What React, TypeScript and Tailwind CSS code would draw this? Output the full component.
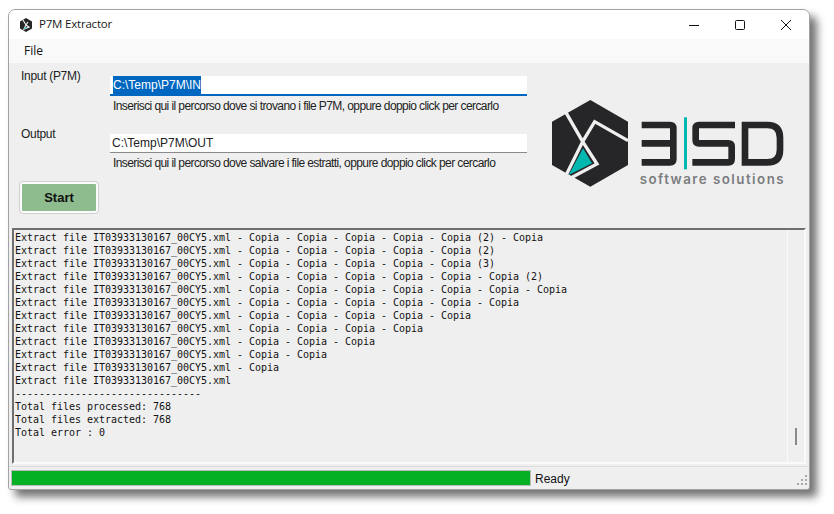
const LOG_LINES = [
  "Extract file IT03933130167_00CY5.xml - Copia - Copia - Copia - Copia - Copia (2) - Copia",
  "Extract file IT03933130167_00CY5.xml - Copia - Copia - Copia - Copia - Copia (2)",
  "Extract file IT03933130167_00CY5.xml - Copia - Copia - Copia - Copia - Copia (3)",
  "Extract file IT03933130167_00CY5.xml - Copia - Copia - Copia - Copia - Copia - Copia (2)",
  "Extract file IT03933130167_00CY5.xml - Copia - Copia - Copia - Copia - Copia - Copia - Copia",
  "Extract file IT03933130167_00CY5.xml - Copia - Copia - Copia - Copia - Copia - Copia",
  "Extract file IT03933130167_00CY5.xml - Copia - Copia - Copia - Copia - Copia",
  "Extract file IT03933130167_00CY5.xml - Copia - Copia - Copia - Copia",
  "Extract file IT03933130167_00CY5.xml - Copia - Copia - Copia",
  "Extract file IT03933130167_00CY5.xml - Copia - Copia",
  "Extract file IT03933130167_00CY5.xml - Copia",
  "Extract file IT03933130167_00CY5.xml",
  "-------------------------------",
  "Total files processed: 768",
  "Total files extracted: 768",
  "Total error : 0",
];

function Logo() {
  return (
    <svg viewBox="60 285 720 285" className="h-[95px] w-[240px]">
      <path d="M184 300L297 365V495L184 560L69 495V365Z" fill="#262628" />
      <path
        d="M111 338L161 425L110 528M161 425L197 365L297 422M161 425L204 492L125 534"
        fill="none"
        stroke="#efefef"
        strokeWidth="10"
      />
      <path d="M162 445L189 490L119 525Z" fill="#00b8b0" />
      <g fill="none" stroke="#262628" strokeWidth="20">
        <path d="M338 375H423Q433 375 433 385V477Q433 487 423 487H338M338 430H433" />
        <path d="M618 375H510Q500 375 500 385V420Q500 430 510 430H598Q608 430 608 440V477Q608 487 598 487H490" />
        <path d="M648 375H715Q753 375 753 413V449Q753 487 715 487H648Z" />
      </g>
      <rect x="465" y="352" width="9" height="156" fill="#00b8b0" />
      <text
        x="332"
        y="551"
        fill="#7b7d80"
        fontFamily="Inter, sans-serif"
        fontSize="40"
        fontWeight="600"
        letterSpacing="4.4"
      >
        software solutions
      </text>
    </svg>
  );
}

function TitleIcon() {
  return (
    <svg viewBox="0 0 14 14" className="h-[14px] w-[14px]">
      <path d="M7 0L13 3.5V10.500L7 14L1 10.500V3.500Z" fill="#262628" />
      <path d="M4 2L7 7L5 11L10 9L7 7L9 4" fill="none" stroke="#efefef" strokeWidth="1.200" />
      <path d="M6 9L5 11L8 10Z" fill="#00b8b0" />
    </svg>
  );
}

function WindowButtons() {
  return (
    <div className="ml-auto mr-[18px] flex items-center gap-[36px]">
      <svg viewBox="0 0 10 10" className="h-[10px] w-[10px]">
        <path d="M0 5.500H10" stroke="#111" strokeWidth="1" />
      </svg>
      <svg viewBox="0 0 10 10" className="h-[10px] w-[10px]">
        <rect x="0.500" y="0.500" width="9" height="9" rx="1" fill="none" stroke="#111" strokeWidth="1" />
      </svg>
      <svg viewBox="0 0 10 10" className="h-[10px] w-[10px]">
        <path d="M0 0L10 10M10 0L0 10" stroke="#111" strokeWidth="1" />
      </svg>
    </div>
  );
}

function Grip() {
  const dots = ["col-start-3", "col-start-2", "col-start-3", "col-start-1", "col-start-2", "col-start-3"];
  return (
    <div className="ml-auto mr-[2px] mt-[4px] grid grid-cols-3 gap-[2px] self-center">
      {dots.map((c, i) => (
        <span key={i} className={`h-[2px] w-[2px] bg-[#a8a8a8] ${c}`} />
      ))}
    </div>
  );
}

export default function App() {
  return (
    <div className="h-[514px] w-[834px] overflow-hidden bg-white pl-[8px] pt-[9px] [font-family:'Liberation_Sans',sans-serif]">
      <div className="flex h-[481px] w-[802px] flex-col overflow-hidden rounded-t-[7px] rounded-b-[3px] border border-[#a3a3a3] bg-[#efefef] shadow-[7px_7px_9px_rgba(0,0,0,0.55)]">
        <div className="flex h-[29px] shrink-0 items-center bg-white pl-[10px]">
          <TitleIcon />
          <span className="mb-[1px] ml-[6px] text-[11.5px] tracking-[-0.2px] text-[#1a1a1a] [font-family:'Open_Sans',sans-serif]">P7M Extractor</span>
          <WindowButtons />
        </div>

        <div className="flex h-[24px] shrink-0 items-center bg-[#f9f9f9] pl-[15px] text-[12px] text-[#111] [font-family:'Open_Sans',sans-serif]">
          File
        </div>

        <div className="flex h-[165px] shrink-0">
          <div className="w-[101px] shrink-0 pl-[12px] text-[12px] tracking-[-0.3px] text-[#222]">
            <div className="mt-[4px]">Input (P7M)</div>
            <div className="mt-[40px]">Output</div>
            <button className="-ml-[1px] mt-[39px] flex h-[31px] w-[78px] items-center justify-center rounded-[3px] border-2 border-[#fbfbfb] bg-[#8fbc8f] text-[13px] font-bold tracking-normal text-[#111] outline outline-1 outline-[#d0d0d0]">
              Start
            </button>
          </div>

          <div className="w-[417px] shrink-0 text-[12px] text-[#222]">
            <div className="mt-[13px] flex h-[20px] items-center border-b-2 border-[#0067c0] bg-white pl-[3px]">
              <span className="bg-[#0067c0] text-white">C:\Temp\P7M\IN</span>
            </div>
            <div className="mt-[1px] pl-[3px] tracking-[-0.59px]">
              Inserisci qui il percorso dove si trovano i file P7M, oppure doppio click per cercarlo
            </div>
            <div className="mt-[19px] flex h-[19px] items-center border-b border-[#8a8a8a] bg-white pl-[2px]">
              C:\Temp\P7M\OUT
            </div>
            <div className="mt-[1px] pl-[3px] tracking-[-0.59px]">
              Inserisci qui il percorso dove salvare i file estratti, oppure doppio click per cercarlo
            </div>
          </div>

          <div className="ml-[22px] mt-[32px]">
            <Logo />
          </div>
        </div>

        <div className="mx-[3px] flex h-[236px] shrink-0 border-2 border-[#6f6f6f] border-b-[#fafafa] border-r-[#fafafa]">
          <div className="min-w-0 flex-1 pl-[1px] pt-[1px] font-['DejaVu_Sans_Mono',monospace] text-[10px] leading-[13px] tracking-[-0.02px] text-[#111]">
            {LOG_LINES.map((line, i) => (
              <div key={i} className="whitespace-pre">
                {line}
              </div>
            ))}
          </div>
          <div className="flex w-[17px] shrink-0 justify-center border-l border-[#fafafa] pt-[198px]">
            <div className="h-[17px] w-[2px] bg-[#8a8a8a]" />
          </div>
        </div>

        <div className="mt-[2px] flex min-h-0 flex-1 border-t border-[#dcdcdc] pl-[2px] text-[12px] text-[#111]">
          <div className="mt-[3px] h-[16px] w-[520px] shrink-0 border border-[#bcbcbc] bg-[#06b025]" />
          <span className="ml-[4px] mt-[3px]">Ready</span>
          <Grip />
        </div>
      </div>
    </div>
  );
}
